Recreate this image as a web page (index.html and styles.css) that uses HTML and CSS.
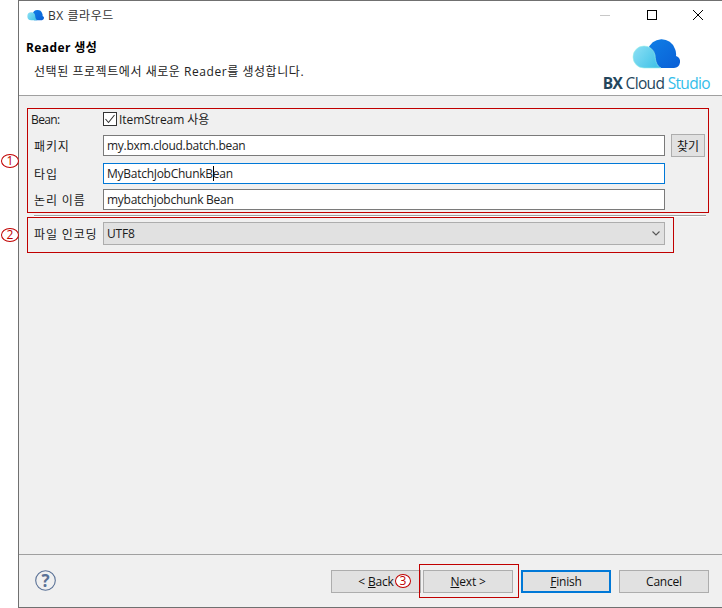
FILE: index.html
```html
<!DOCTYPE html>
<html lang="ko">
<head>
<meta charset="utf-8">
<title>BX 클라우드</title>
<link rel="stylesheet" href="styles.css">
</head>
<body>
<div class="page">
  <div class="window">
    <div class="titlebar">
      <svg class="appicon" width="17" height="12" viewBox="0 0 48 31"><defs><linearGradient id="a" x1="0" y1="0" x2="1" y2="1"><stop offset="0" stop-color="#0f7fe6"/><stop offset="1" stop-color="#0a5fd6"/></linearGradient><linearGradient id="a2" x1="0" y1="0" x2="1" y2="0.600"><stop offset="0" stop-color="#8ee0f5"/><stop offset="1" stop-color="#45c4e8"/></linearGradient></defs><path d="M16 12A14 14 0 0 1 43 11Q44.500 14 44 18A6.200 6.200 0 0 1 42 30H20Z" fill="url(#a)"/><path d="M12 8A11 11 0 0 1 23 17C23.500 24 25 28 29 30H12A11 11 0 0 1 12 8Z" fill="url(#a2)"/></svg>
      <span class="title">BX 클라우드</span>
      <div class="winbtns">
        <svg width="12" height="12" viewBox="0 0 12 12"><path d="M0 6.500H10" stroke="#c8c8c8"/></svg>
        <svg width="12" height="12" viewBox="0 0 12 12"><rect x="1.500" y="1.500" width="9" height="9" fill="none" stroke="#000"/></svg>
        <svg width="12" height="12" viewBox="0 0 12 12"><path d="M1 1l10 10M11 1L1 11" stroke="#000" stroke-width="1" fill="none"/></svg>
      </div>
    </div>
    <header class="banner">
      <div class="bannertext">
        <div class="heading">Reader 생성</div>
        <div class="desc">선택된 프로젝트에서 새로운 Reader를 생성합니다.</div>
      </div>
      <div class="logo">
        <svg width="48" height="31" viewBox="0 0 48 31"><defs><linearGradient id="b" x1="0" y1="0" x2="1" y2="1"><stop offset="0" stop-color="#0f7fe6"/><stop offset="1" stop-color="#0a5fd6"/></linearGradient><linearGradient id="c" x1="0" y1="0" x2="1" y2="0.600"><stop offset="0" stop-color="#8ee0f5"/><stop offset="1" stop-color="#45c4e8"/></linearGradient></defs><path d="M16 12A14 14 0 0 1 43 11Q44.500 14 44 18A6.200 6.200 0 0 1 42 30H20Z" fill="url(#b)"/><path d="M12 8A11 11 0 0 1 23 17C23.500 24 25 28 29 30H12A11 11 0 0 1 12 8Z" fill="url(#c)" stroke="#9cf0e8" stroke-width=".6"/></svg>
        <div class="brand"><b>BX</b> Cloud <span class="studio">Studio</span></div>
      </div>
    </header>
    <main class="content">
      <div class="form">
        <div class="row beanrow">
          <span class="beanlabel">Bean:</span>
          <label class="check">
            <svg width="14" height="14" viewBox="0 0 14 14"><rect x=".5" y=".5" width="13" height="13" fill="#fff" stroke="#333"/><path d="M2.500 7l3 3.500 6-7.500" fill="none" stroke="#333" stroke-width="1.100"/></svg>
            ItemStream 사용
          </label>
        </div>
        <div class="row pkgrow">
          <span class="label">패키지</span>
          <div class="input">my.bxm.cloud.batch.bean</div>
          <button class="find">찾기</button>
        </div>
        <div class="row typerow">
          <span class="label">타입</span>
          <div class="input focus">MyBatchJobChunkB<i class="caret"></i>ean</div>
        </div>
        <div class="row namerow">
          <span class="label">논리 이름</span>
          <div class="input">mybatchjobchunk Bean</div>
        </div>
        <div class="sep"></div>
        <div class="row comborow">
          <span class="label">파일 인코딩</span>
          <div class="combo"><span>UTF8</span>
            <svg width="8" height="5" viewBox="0 0 8 5"><path d="M.5 .5l3.500 3.500 3.500-3.500" fill="none" stroke="#555" stroke-width="1.100"/></svg>
          </div>
        </div>
      </div>
    </main>
    <footer class="footer">
      <svg class="help" width="21" height="21" viewBox="0 0 21 21"><circle cx="10.500" cy="10.500" r="9.800" fill="none" stroke="#5a7196" stroke-width="1.100"/><text x="10.500" y="16.500" text-anchor="middle" class="helpq">?</text></svg>
      <div class="btns">
        <button class="btn back">&lt; <u>B</u>ack</button>
        <button class="btn"><u>N</u>ext &gt;</button>
        <button class="btn primary"><u>F</u>inish</button>
        <button class="btn">Cancel</button>
      </div>
    </footer>
  </div>
  <div class="redbox box1"></div>
  <div class="redbox box2"></div>
  <div class="redbox box3"></div>
  <span class="num n1">1</span>
  <span class="num n2">2</span>
  <span class="num n3">3</span>
</div>
</body>
</html>
```
FILE: styles.css
```css
* { box-sizing: border-box; }
html, body { margin: 0; padding: 0; background: #fff; }
body { font-family: "Open Sans", "Noto Sans CJK KR", sans-serif; font-size: 12px; color: #1a1a1a; }
.page { position: relative; width: 722px; height: 608px; padding-left: 18px; overflow: hidden; }
.window { width: 704px; height: 608px; border-left: 1px solid #707070; border-top: 1px solid #707070; border-bottom: 1px solid #707070; display: flex; flex-direction: column; background: #f0f0f0; }
.titlebar { height: 29px; background: #fff; display: flex; align-items: center; padding: 0 0 1px 8px; flex: none; }
.appicon { flex: none; }
.title { margin-left: 4px; font-size: 12px; color: #333; letter-spacing: .55px; }
.winbtns { margin-left: auto; display: flex; gap: 34px; padding-right: 18px; }
.banner { height: 66px; background: #fff; border-bottom: 1px solid #a0a0a0; display: flex; justify-content: space-between; flex: none; }
.bannertext { padding: 9px 0 0 7px; }
.heading { font-weight: 700; font-size: 12px; line-height: 18px; color: #000; letter-spacing: .4px; }
.desc { margin: 6px 0 0 8px; line-height: 18px; letter-spacing: .55px; color: #222; }
.logo { display: flex; flex-direction: column; align-items: flex-end; padding-right: 12px; margin-top: 8px; }
.logo svg { margin-right: 30px; flex: none; }
.brand { font-size: 15.5px; line-height: 17px; color: #24465c; font-family: "Open Sans", sans-serif; letter-spacing: -.65px; white-space: nowrap; margin-top: 6px; }
.studio { color: #33bdea; }
.content { flex: 1; padding: 14px 15px 0 12px; }
.form { display: flex; flex-direction: column; }
.row { display: flex; align-items: center; }
.label { width: 72px; padding-left: 3px; flex: none; letter-spacing: .85px; white-space: nowrap; }
.beanrow { height: 18px; }
.beanlabel { width: 72px; flex: none; letter-spacing: -.6px; }
.check { display: flex; align-items: center; gap: 2px; letter-spacing: -.05px; }
.pkgrow { margin-top: 6px; }
.typerow { margin-top: 6px; }
.namerow { margin-top: 5px; }
.input { width: 562px; height: 21px; background: #fff; border: 1px solid #7a7a7a; line-height: 19px; padding-left: 3px; color: #222; flex: none; letter-spacing: -.27px; }
.input.focus { border-color: #0078d7; }
.caret { display: inline-block; width: 1px; height: 15px; background: #000; vertical-align: -3px; margin-right: -1px; }
.find { width: 34px; height: 23px; margin-left: 6px; background: #e1e1e1; border: 1px solid #adadad; padding: 0; font: inherit; color: #111; }
.sep { width: 672px; height: 2px; margin: 5px 0 0 3px; background: #fff; border-top: 1px solid #a0a0a0; }
.comborow { margin-top: 5px; }
.combo { width: 562px; height: 23px; background: #e1e1e1; border: 1px solid #adadad; display: flex; align-items: center; justify-content: space-between; padding: 0 4px 0 3px; flex: none; letter-spacing: -.2px; }
.footer { height: 53px; border-top: 1px solid #a0a0a0; display: flex; align-items: flex-start; flex: none; position: relative; }
.help { margin: 15px 0 0 16px; flex: none; }
.helpq { font: 700 17px "Open Sans", sans-serif; fill: #5a7196; }
.btns { margin-left: auto; display: flex; gap: 8px; padding: 15px 13px 0 0; }
.btn { width: 90px; height: 23px; background: #e1e1e1; border: 1px solid #adadad; padding: 0; font: inherit; color: #111; letter-spacing: -.2px; }
.back { margin-right: -6px; }
.primary { border: 2px solid #0078d7; }
.redbox { position: absolute; border: 1px solid #c00000; }
.box1 { left: 27px; top: 108px; width: 682px; height: 105px; }
.box2 { left: 27px; top: 217px; width: 647px; height: 36px; }
.box3 { left: 419px; top: 564px; width: 100px; height: 34px; }
.num { position: absolute; width: 18px; height: 14px; border: 1px solid #c00000; border-radius: 50%; background: #fff; color: #c00000; font-size: 12px; line-height: 12px; text-align: center; }
.n1 { left: 1px; top: 154px; }
.n2 { left: 1px; top: 228px; }
.n3 { left: 395px; top: 574px; width: 16px; }
```
